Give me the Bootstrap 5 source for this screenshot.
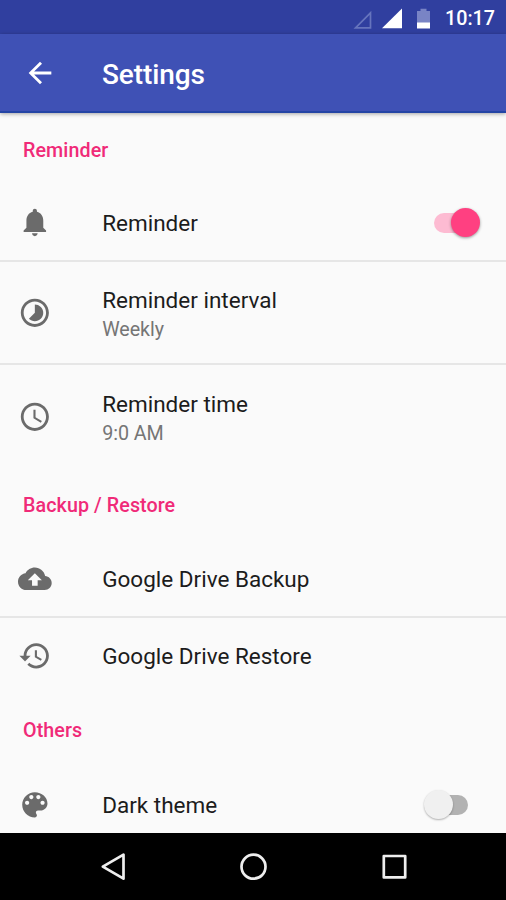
<!DOCTYPE html>
<html lang="en">
<head>
<meta charset="utf-8">
<meta name="viewport" content="width=device-width, initial-scale=1">
<title>Settings</title>
<link href="https://cdn.jsdelivr.net/npm/bootstrap@5.3.0/dist/css/bootstrap.min.css" rel="stylesheet">
<style>
body{font-family:Roboto,"Liberation Sans",sans-serif;background:#fafafa;color:#1c1c1c}
.screen{height:900px}
.statusbar{height:34px;background:#303f9f;padding:3px 11px 0 0;font-size:19.7px;font-weight:500}
.appbar{height:79px;background:#3f51b5;border-bottom:2px solid #2445a5;padding:1px 0 0 23px;box-shadow:0 1px 4px rgba(0,0,0,.35);z-index:1}
.appbar h1{font-size:28px;font-weight:500;margin-left:45px;line-height:34px;padding-top:3px;letter-spacing:-.1px}
.appbar svg{width:34px;height:34px}
.group-title{height:72px;padding:3px 23px 0;font-size:19.7px;font-weight:500;color:#f02a78;letter-spacing:.08px;margin:0}
.group-title.mid{height:73px}
.pref{height:77px;padding:0 26px 0 18px;color:inherit}
.pref.short{height:75px}
.pref.two{height:103px}
.pref.ruled{border-bottom:2px solid #e6e6e6}
.pref>svg{width:33.7px;height:33.7px;fill:#6b6b6b;margin-right:50.5px}
.pref .name{font-size:22.5px;line-height:28px}
.pref .value{font-size:19.7px;line-height:32px;color:#757575;letter-spacing:-.05px}
.pref .lines{padding-top:6px}
.toggle{width:56px;height:30px}
.toggle i{position:absolute;border-radius:50px}
.toggle .track{width:36px;height:20px;top:5px}
.toggle .thumb{width:29px;height:29px;top:0;box-shadow:0 1px 3px rgba(0,0,0,.4)}
.toggle.on .track{right:10px;background:#fdbbd2}
.toggle.on .thumb{right:0;background:#ff4081}
.toggle.off .track{right:12px;background:#b2b2b2}
.toggle.off .thumb{left:0;background:#f0f0f0;box-shadow:0 1px 2px rgba(0,0,0,.3)}
.navkeys{height:67px;background:#000}
</style>
</head>
<body>
<div class="screen d-flex flex-column overflow-hidden">
  <header class="statusbar d-flex align-items-center justify-content-end text-white flex-shrink-0">
    <svg width="82" height="24" viewBox="0 0 82 24">
      <path d="M4.500 20.800H19.500V5.800z" fill="none" stroke="#6674bd" stroke-width="1.700"/>
      <path d="M31 21.300H51V1.500z" fill="#fff"/>
      <path d="M66 4h3.500V1.800h6V4H79v13H66z" fill="#7984c5"/>
      <path d="M66 15.500h13v6H66z" fill="#fff"/>
    </svg>
    <span class="clock ms-2 ps-1">10:17</span>
  </header>
  <nav class="appbar d-flex align-items-center text-white position-relative flex-shrink-0">
    <svg viewBox="0 0 24 24" fill="#fff"><path d="M20 11H7.830l5.590-5.590L12 4l-8 8 8 8 1.410-1.410L7.830 13H20v-2z"/></svg>
    <h1 class="mb-0 title">Settings</h1>
  </nav>
  <main class="flex-grow-1 overflow-hidden">
    <h2 class="group-title d-flex align-items-center">Reminder</h2>
    <div class="pref ruled d-flex align-items-center">
      <svg viewBox="0 0.500 24 24"><path d="M12 22c1.100 0 2-.9 2-2h-4c0 1.100.89 2 2 2zm6-6v-5c0-3.070-1.640-5.640-4.500-6.320V4c0-.83-.67-1.500-1.500-1.500s-1.500.67-1.500 1.500v.68C7.630 5.360 6 7.920 6 11v5l-2 2v1h16v-1l-2-2z"/></svg>
      <span class="name">Reminder</span>
      <span class="toggle on position-relative ms-auto"><i class="track"></i><i class="thumb"></i></span>
    </div>
    <div class="pref two ruled d-flex align-items-center">
      <svg viewBox="0 0 24 24"><path d="M16.240 7.760C15.070 6.590 13.540 6 12 6v6l-4.240 4.240c2.340 2.340 6.140 2.340 8.490 0 2.340-2.340 2.340-6.140-.01-8.480zM12 2C6.480 2 2 6.480 2 12s4.480 10 10 10 10-4.480 10-10S17.520 2 12 2zm0 18c-4.420 0-8-3.580-8-8s3.580-8 8-8 8 3.580 8 8-3.580 8-8 8z"/></svg>
      <div class="lines"><div class="name">Reminder interval</div><div class="value">Weekly</div></div>
    </div>
    <div class="pref two d-flex align-items-center">
      <svg viewBox="0 0 24 24"><path d="M11.990 2C6.470 2 2 6.480 2 12s4.470 10 9.990 10C17.520 22 22 17.520 22 12S17.520 2 11.990 2zM12 20c-4.420 0-8-3.580-8-8s3.580-8 8-8 8 3.580 8 8-3.580 8-8 8zm.5-13H11v6l5.250 3.150.75-1.230-4.500-2.670z"/></svg>
      <div class="lines"><div class="name">Reminder time</div><div class="value">9:0 AM</div></div>
    </div>
    <h2 class="group-title mid d-flex align-items-center">Backup / Restore</h2>
    <div class="pref ruled d-flex align-items-center">
      <svg viewBox="0 0 24 24"><path d="M19.350 10.040C18.670 6.590 15.640 4 12 4 9.110 4 6.600 5.640 5.350 8.040 2.340 8.360 0 10.910 0 14c0 3.310 2.690 6 6 6h13c2.760 0 5-2.240 5-5 0-2.640-2.050-4.780-4.650-4.960zM14 13v4h-4v-4H7l5-5 5 5h-3z"/></svg>
      <span class="name">Google Drive Backup</span>
    </div>
    <div class="pref short d-flex align-items-center">
      <svg viewBox="0 0 24 24"><path d="M13 3c-4.970 0-9 4.030-9 9H1l3.890 3.890.07.14L9 12H6c0-3.870 3.130-7 7-7s7 3.130 7 7-3.130 7-7 7c-1.930 0-3.680-.79-4.940-2.060l-1.420 1.420C8.270 19.990 10.510 21 13 21c4.970 0 9-4.030 9-9s-4.030-9-9-9zm-1 5v5l4.280 2.540.72-1.210-3.500-2.080V8H12z"/></svg>
      <span class="name">Google Drive Restore</span>
    </div>
    <h2 class="group-title mid d-flex align-items-center">Others</h2>
    <div class="pref d-flex align-items-center">
      <svg viewBox="0 0 24 24"><path d="M12 3c-4.970 0-9 4.030-9 9s4.030 9 9 9c.83 0 1.500-.67 1.500-1.500 0-.39-.15-.74-.39-1.010-.23-.26-.38-.61-.38-.99 0-.83.67-1.500 1.500-1.500H16c2.760 0 5-2.240 5-5 0-4.420-4.030-8-9-8zm-5.500 9c-.83 0-1.500-.67-1.500-1.500S5.670 9 6.500 9 8 9.670 8 10.500 7.330 12 6.500 12zm3-4C8.670 8 8 7.330 8 6.500S8.670 5 9.500 5s1.500.67 1.500 1.500S10.330 8 9.500 8zm5 0c-.83 0-1.500-.67-1.500-1.500S13.670 5 14.500 5s1.500.67 1.500 1.500S15.330 8 14.500 8zm3 4c-.83 0-1.500-.67-1.500-1.500S16.670 9 17.500 9s1.500.67 1.500 1.500-.67 1.500-1.500 1.500z"/></svg>
      <span class="name">Dark theme</span>
      <span class="toggle off position-relative ms-auto"><i class="track"></i><i class="thumb"></i></span>
    </div>
  </main>
  <footer class="navkeys flex-shrink-0">
    <svg width="506" height="67" viewBox="0 0 506 67" fill="none" stroke="#eee" stroke-width="2.700" stroke-linejoin="round">
      <path d="M102.800 33.700L123.500 21.700V45.700z"/>
      <circle cx="253.500" cy="33.700" r="12"/>
      <rect x="383.800" y="23" width="21.400" height="21.400"/>
    </svg>
  </footer>
</div>
<script src="https://cdn.jsdelivr.net/npm/bootstrap@5.3.0/dist/js/bootstrap.bundle.min.js"></script>
</body>
</html>
